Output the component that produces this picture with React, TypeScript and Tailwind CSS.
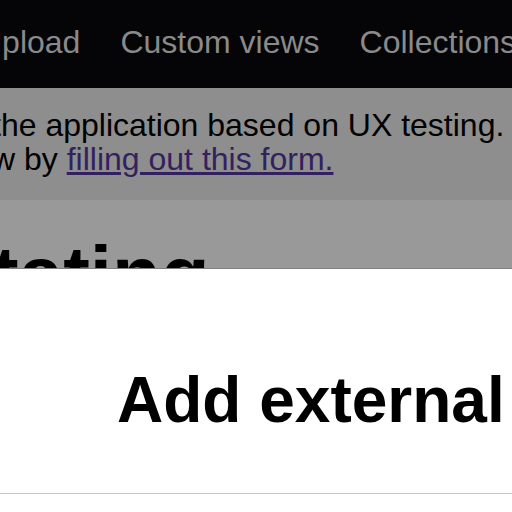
import React from "react";

export default function App() {
  return (
    <div className="relative w-[512px] h-[512px] overflow-hidden bg-white font-['Liberation_Sans',Arial,sans-serif]">
      <nav className="h-[88px] bg-[#050508] pt-[24px]">
        <ul className="flex gap-[40px] -ml-[21px] whitespace-nowrap text-[32px] leading-[36px] text-[#8a8a8a]">
          <li className="shrink-0">Upload</li>
          <li className="shrink-0">Custom views</li>
          <li className="shrink-0">Collections</li>
          <li className="shrink-0">Help</li>
        </ul>
      </nav>
      <div className="h-[112px] bg-[#8e8e8e] pt-[20px] text-[32px] leading-[34px] text-black whitespace-nowrap">
        <div className="-ml-[8px]">
          <div>the application based on UX testing.</div>
          <div>
            w by{" "}
            <a href="#" className="text-[#33215f] underline">
              filling out this form.
            </a>
          </div>
        </div>
      </div>
      <div className="h-[400px] bg-[#999999] pt-[31px]">
        <h1 className="-ml-[8px] whitespace-nowrap text-[80px] leading-[88px] font-bold text-black">
          tating
        </h1>
      </div>
      <div className="absolute left-0 right-0 top-[268px] bottom-0 bg-white border-t border-[#808080]">
        <div className="h-[225px] border-b border-[#c4c4c4] pt-[94px] pl-[117px]">
          <h2 className="whitespace-nowrap text-[64px] leading-[74px] font-bold text-black">
            Add external resource
          </h2>
        </div>
      </div>
    </div>
  );
}
